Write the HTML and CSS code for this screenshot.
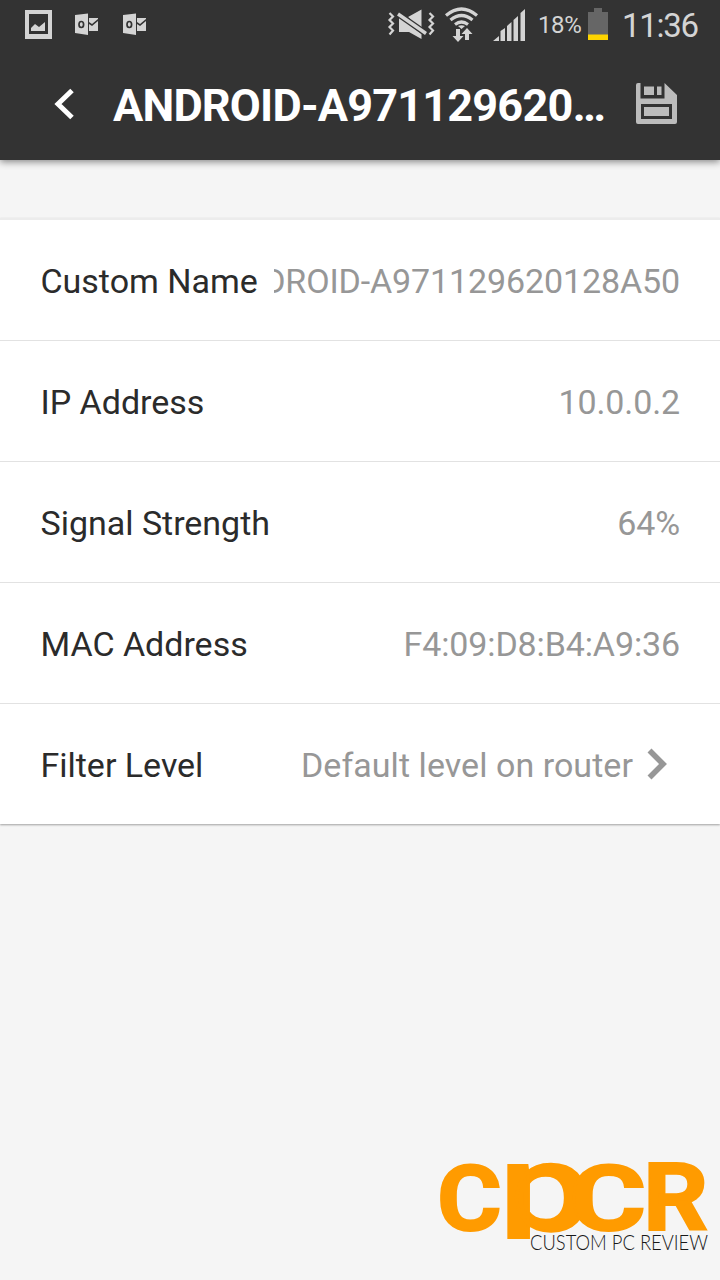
FILE: index.html
```html
<!DOCTYPE html>
<html lang="en">
<head>
<meta charset="utf-8">
<title>Device details</title>
<link rel="stylesheet" href="styles.css">
</head>
<body>
<div class="screen">
  <header class="header">
    <div class="status">
      <svg class="status-left" viewBox="0 0 180 50" aria-hidden="true">
        <path fill="#d4d4d4" fill-rule="evenodd" d="M25 10H52V39H25ZM29 14V34H48V14Z"/>
        <path fill="#d4d4d4" d="M31 31V28L35 24L39 27L45 22V31Z"/>
        <g id="mail">
          <path fill="#d4d4d4" d="M75 15L88 13.5V35L75 33Z"/>
          <path fill="#d4d4d4" d="M89 18H98V19L92 24L89 22ZM89 24L92 26L98 21V31H89Z"/>
          <ellipse cx="81.300" cy="24.500" rx="2.300" ry="3" fill="none" stroke="#333" stroke-width="1.700"/>
        </g>
        <use href="#mail" x="48"/>
      </svg>
      <svg class="status-right" viewBox="380 0 150 50" aria-hidden="true">
        <g fill="none" stroke="#d4d4d4" stroke-width="2.200">
          <path d="M389.500 13L393 16.500L389.500 20L393 23.500L389.500 27L393 30.500L389.500 34.500"/>
          <path d="M429.500 13L433 16.500L429.500 20L433 23.500L429.500 27L433 30.500L429.500 34.500"/>
        </g>
        <path fill="#d4d4d4" d="M408 17L421.500 9.500V30ZM399 17L421.500 34V39L409 32H399Z"/>
        <path d="M398 14L426 33.500" stroke="#333" stroke-width="6"/>
        <path d="M398 14L426 33.500" stroke="#d4d4d4" stroke-width="3.400"/>
        <g fill="none" stroke="#d4d4d4" stroke-width="3.200">
          <path d="M446 15.500Q461.500 2.500 477 15.500"/>
          <path d="M450.500 20Q461.500 11 472.500 20"/>
          <path d="M455 24.500Q461.500 19.500 468 24.500"/>
        </g>
        <path fill="#d4d4d4" d="M458 26Q461.500 24.500 465 26L461.500 29ZM456 29H460V36H463.500L458 42L452.500 36H456ZM467 28L472.500 34H469V40H465V34H461.500Z"/>
        <path fill="#d4d4d4" d="M493 41L499 36V41ZM500.500 41V31L505 28V41ZM507 41V26L511.500 22V41ZM513.500 41V20L518 16V41ZM520.500 41V13L525 9V41Z"/>
      </svg>
      <span class="percent">18%</span>
      <svg class="battery" viewBox="0 0 20 32" aria-hidden="true"><path fill="#666" d="M0 4H6V0H14V4H20V27H0Z"/><path fill="#fdd400" d="M0 26.500H20V32H0Z"/></svg>
      <span class="clock">11:36</span>
    </div>
    <div class="appbar">
      <svg class="back" viewBox="0 0 20 32" aria-hidden="true"><path fill="none" stroke="#fff" stroke-width="5" d="M18 2.500L4 16L18 29.500"/></svg>
      <h1 class="title">ANDROID-A971129620<span class="dots">…</span></h1>
      <svg class="save" viewBox="0 0 41 41" aria-hidden="true">
        <path fill="#bcbcbc" fill-rule="evenodd" d="M0 2Q0 0 2 0H4.500V15.500H28.500V0L41 12V39Q41 41 39 41H2Q0 41 0 39ZM5 21V36H36V21Z"/>
        <path fill="#bcbcbc" d="M8 3.500H18V12H8ZM21 3.500H25.500V12H21ZM8 24H33V33H8Z"/>
      </svg>
    </div>
  </header>
  <main class="list">
    <div class="row"><span class="label">Custom Name</span><span class="value clipped">ANDROID-A971129620128A50</span></div>
    <div class="row"><span class="label">IP Address</span><span class="value">10.0.0.2</span></div>
    <div class="row"><span class="label">Signal Strength</span><span class="value">64%</span></div>
    <div class="row"><span class="label">MAC Address</span><span class="value">F4:09:D8:B4:A9:36</span></div>
    <div class="row"><span class="label">Filter Level</span><span class="value level">Default level on router</span><svg class="chevron" viewBox="0 0 20 32" aria-hidden="true"><path fill="none" stroke="#979797" stroke-width="5.600" d="M2.500 2.500L16 16L2.500 29.500"/></svg></div>
  </main>
  <footer class="brand">
    <svg class="logo" viewBox="0 0 270 100" role="img" aria-label="CPCR Custom PC Review">
      <defs><clipPath id="stem"><rect x="60" y="0" width="90" height="78"/></clipPath></defs>
      <g class="wordmark">
        <text transform="translate(-3 68.500) scale(.99 .91)">C</text>
        <g clip-path="url(#stem)"><text class="bowl" transform="translate(59 68.500) scale(1.640 1.230)">p</text></g>
        <text transform="translate(129 68.500) scale(1.180 .91)">C</text>
        <text transform="translate(203 69) scale(1.020 .94)">R</text>
      </g>
      <text class="tagline" x="90" y="89" textLength="178" lengthAdjust="spacingAndGlyphs">CUSTOM PC REVIEW</text>
    </svg>
  </footer>
</div>
</body>
</html>
```
FILE: styles.css
```css
* { box-sizing: border-box; }
body { margin: 0; background: #f5f5f5; font-family: Roboto, "Liberation Sans", sans-serif; }
.screen { width: 720px; height: 1280px; display: flex; flex-direction: column; overflow: hidden; }
.header { height: 160px; flex: none; background: #333; box-shadow: 0 2px 7px rgba(0,0,0,.45); }
.status { height: 50px; display: flex; color: #d4d4d4; }
.status-left { width: 180px; height: 50px; margin-right: 200px; }
.status-right { width: 150px; height: 50px; }
.percent { font-size: 24px; line-height: 51px; width: 50px; padding-left: 8px; white-space: nowrap; letter-spacing: -.4px; }
.battery { width: 20px; height: 32px; margin: 8px 0 0 8px; }
.clock { font-size: 33px; line-height: 52px; margin-left: 14px; letter-spacing: -1.3px; }
.appbar { height: 110px; display: flex; align-items: center; padding: 0 43px 2px 54px; }
.back { width: 20px; height: 32px; }
.title { width: 500px; margin: 4px 0 0 39px; font-size: 45px; line-height: 60px; font-weight: 700; color: #fff; white-space: nowrap; letter-spacing: -.8px; }
.dots { letter-spacing: 0; }
.save { width: 41px; height: 41px; margin: -1px 0 0 auto; }
.list { margin-top: 58px; background: #fff; border-top: 2px solid #ececec; box-shadow: 0 1px 2px rgba(0,0,0,.35); }
.row { height: 121px; display: flex; align-items: center; padding: 2px 40px 0 40.500px; border-bottom: 1px solid #e2e2e2; font-size: 34px; }
.row:last-child { height: 120px; border-bottom: 0; }
.label { color: #2b2b2b; white-space: nowrap; letter-spacing: -.02px; }
.value { margin-left: auto; color: #979797; white-space: nowrap; letter-spacing: -.12px; }
.level { letter-spacing: .05px; }
.clipped { width: 406px; display: flex; justify-content: flex-end; overflow: hidden; }
.chevron { width: 20px; height: 32px; margin: 0 13px 2px 14px; }
.brand { margin-top: auto; padding: 0 10px 19px 0; display: flex; justify-content: flex-end; }
.logo { width: 270px; height: 100px; }
.wordmark { font-family: Roboto, sans-serif; font-weight: 700; font-size: 100px; fill: #ff9b00; stroke: #ff9b00; stroke-width: 2px; }
.bowl { font-weight: 500; }
.tagline { font-family: Lato, sans-serif; font-weight: 300; font-size: 21px; fill: #181818; }
```
